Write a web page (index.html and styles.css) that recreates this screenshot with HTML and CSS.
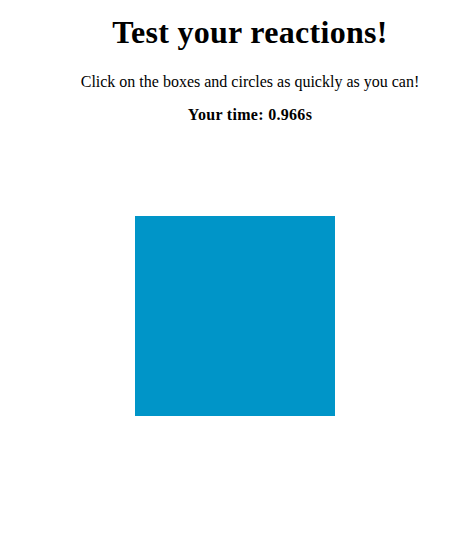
FILE: index.html
```html
<!DOCTYPE html>
<html>
<head>
<meta charset="utf-8">
<title>Test your reactions!</title>
<link rel="stylesheet" href="styles.css">
</head>
<body>
<div class="header">
  <h1 class="title">Test your reactions!</h1>
  <p class="intro">Click on the boxes and circles as quickly as you can!</p>
  <p class="time">Your time: <span class="time-value">0.966s</span></p>
</div>
<div class="arena">
  <div class="shape" style="left: 127px; top: 92px;"></div>
</div>
</body>
</html>
```
FILE: styles.css
```css
html, body {
  background: #ffffff;
}
body {
  margin: 0 8px 8px 8px;
  font-family: "Liberation Serif", "Times New Roman", serif;
  color: #000000;
}
.header {
  padding-left: 28px;
  text-align: center;
}
.title {
  font-size: 32px;
  font-weight: bold;
  margin: 14px 0 0 0;
  line-height: 37px;
  letter-spacing: 0.3px;
}
.intro {
  font-size: 16px;
  margin: 22px 0 0 0;
  line-height: 18px;
}
.time {
  font-size: 16px;
  font-weight: bold;
  margin: 15px 0 0 0;
  line-height: 18px;
  letter-spacing: 0.3px;
}
.arena {
  position: relative;
  height: 330px;
}
.shape {
  position: absolute;
  width: 200px;
  height: 200px;
  background: #0095c8;
}
```
